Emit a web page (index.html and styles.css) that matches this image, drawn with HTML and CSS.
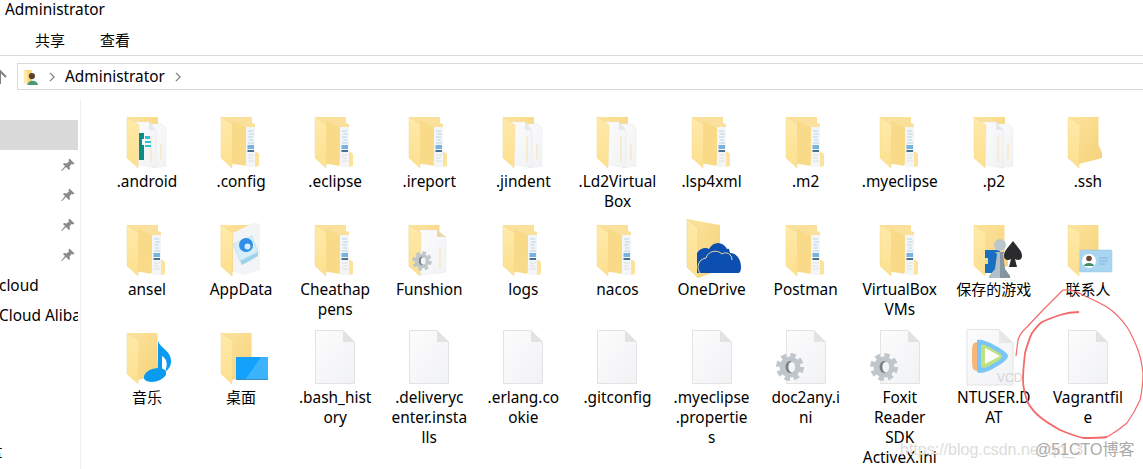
FILE: index.html
```html
<!DOCTYPE html>
<html lang="zh-CN">
<head>
    <meta charset="UTF-8">
    <title>Administrator</title>
    <link rel="stylesheet" href="styles.css">
</head>
<body>
    <svg class="defs" width="0" height="0">
        <defs>
            <linearGradient id="flap" x1="0" y1="0" x2="0" y2="1">
                <stop offset="0" stop-color="#ffeaa9"/>
                <stop offset="1" stop-color="#fde08f"/>
            </linearGradient>
            <linearGradient id="back" x1="0" y1="0" x2="1" y2="1">
                <stop offset="0" stop-color="#fde39d"/>
                <stop offset="1" stop-color="#f5d279"/>
            </linearGradient>
            <linearGradient id="sheet" x1="0" y1="0" x2="1" y2="1">
                <stop offset="0" stop-color="#fcfcfd"/>
                <stop offset="1" stop-color="#f1f2f4"/>
            </linearGradient>

            <!-- folders -->
            <path id="flap-1" d="M12 5 L24 13 L23 56 L12 46 Z" fill="url(#flap)" stroke="#f0d48a" stroke-width=".4"/>
            <g id="f-plain">
                <path d="M12 5 H42.5 V33 L46 41 V46 L23 52 Z" fill="url(#back)"/>
                <use href="#flap-1"/>
            </g>
            <g id="f-docs">
                <path d="M12 5 H43 V11 L46 12 V39 L50 42 V54 L23 52 Z" fill="#fae09a"/>
                <use href="#flap-1"/>
                <path d="M23 9 L38 16 L36 54 L23 51 Z" fill="#f8da88"/>
                <rect x="37" y="15" width="9" height="40" fill="#f3f5f6"/>
                <g stroke="#b5d3ea" stroke-width="1">
                    <path d="M39 19 H44 M40 22 H45 M39 25 H44 M40 28 H44 M39 31 H45"/>
                    <path d="M38.500 34 H45 M38.500 36 H45" stroke="#79b2dc" stroke-width="2"/>
                    <path d="M38.500 39 H45" stroke="#45708f" stroke-width="2"/>
                    <path d="M39 43 H45 M39 46 H44 M39 49 H45" stroke="#dde0e3"/>
                </g>
                <path d="M46 40 L50 43 V54 L46 55 Z" fill="#fde29c"/>
            </g>
            <g id="f-sheets">
                <path d="M12 5 H43 V40 L23 52 Z" fill="url(#back)"/>
                <path d="M30 12 H47 L51 16 V54 L38 56 Z" fill="url(#sheet)" stroke="#e8e9ea" stroke-width=".5"/>
                <path d="M19 10 H34 L41 18 V56 L20 52 Z" fill="url(#sheet)" stroke="#e4e5e6" stroke-width=".5"/>
                <path d="M34 10 V18 H41" fill="#e6e7e9"/>
                <path d="M36 24 V50" stroke="#f7e3a6" stroke-width="1"/>
                <path d="M46 32 V48" stroke="#f7e3a6" stroke-width="1"/>
                <use href="#flap-1"/>
            </g>
            <g id="f-android">
                <use href="#f-sheets"/>
                <path d="M24 21 H29 V27 H27 V33 H29 V48 H24 Z" fill="#0c8d83"/>
                <path d="M30 24 H35 V27 H30 Z M30 29 H36 V31 H30 Z M30 33 H36 V35 H30 Z" fill="#2cc4d2"/>
            </g>
            <g id="f-funshion">
                <use href="#f-plain"/>
                <path d="M23 10 H40 L49 17 V52 L23 55 Z" fill="url(#sheet)" stroke="#e4e5e6" stroke-width=".5"/>
                <path d="M40 10 V17 H49" fill="#ead9a8"/>
                <path d="M43 28 V48" stroke="#f7e3a6" stroke-width="1"/>
                <use href="#flap-1"/>
                <use href="#gear-small"/>
            </g>
            <g id="f-appdata">
                <use href="#f-plain"/>
                <path d="M24 13 L46 2 L51 5 V50 L34 55 L24 51 Z" fill="#f3f4f6"/>
                <path d="M24 24 L43 16 L49 32 L31 41 Z" fill="#d6eef9" stroke="#a7d6ee" stroke-width=".5"/>
                <path d="M31 41 L49 32 L49 36 L33 45 Z" fill="#9fd3ec"/>
                <circle cx="37" cy="25" r="7" fill="#2f8fe6"/>
                <circle cx="38.500" cy="26.500" r="3" fill="#d8ecfb"/>
                <use href="#flap-1"/>
            </g>
            <g id="f-music">
                <use href="#f-plain"/>
                <ellipse cx="40" cy="47" rx="11.500" ry="6.500" fill="#0a9af0" transform="rotate(-15 40 47)"/>
                <path d="M43 12 C44 20 56 22 56 33 C56 38 54 41 50 44 C53 36 52 31 47 28 V45 H43 Z" fill="#0a9af0"/>
            </g>
            <g id="f-desktop">
                <use href="#f-plain"/>
                <rect x="27" y="29" width="32" height="23" fill="#13a1fb"/>
                <path d="M36 52 L52 29 H59 V52 Z" fill="#3cb3fd"/>
                <rect x="27" y="51" width="32" height="1" fill="#3d8dc4"/>
            </g>
            <g id="f-onedrive">
                <path d="M7 -1 L40 5 V50 L18 58 Z" fill="url(#back)"/>
                <path d="M7 -1 L18 8 V58 L7 47 Z" fill="url(#flap)" stroke="#e5cd85" stroke-width=".5"/>
                <path d="M17 53 V33 C20 28 26 27 29 29 C33 21 43 21 47 29 C50 28 49 30 50 33 C57 33 61 40 61 47 C61 51 60 53 58 53 Z" fill="#0d4fb0"/>
                <path d="M20 53 C16 48 18 39 26 38 C28 31 37 29 42 34 C46 31 52 34 52 40" fill="none" stroke="#e9dca8" stroke-width="1"/>
            </g>
            <g id="f-games">
                <use href="#f-plain"/>
                <path d="M23 30 H38 V53 H23 V44 H26 V38 H23 Z" fill="#1a6fc0"/>
                <path d="M51 21 C47 27 42 30 42 36 C42 40 46 41 49 39 L47 47 H55 L53 39 C56 41 60 40 60 36 C60 30 55 27 51 21 Z" fill="#2b2b2d"/>
                <circle cx="38" cy="25" r="6" fill="#bcc7cd"/>
                <path d="M33 32 H43 L41 34 L43 49 L48 56 V58 H27 V56 L33 49 L35 34 Z" fill="#b3bfc6"/>
                <path d="M38 32 H43 L41 34 L43 49 L48 56 V58 H38 Z" fill="#8696a0"/>
            </g>
            <g id="f-contacts">
                <use href="#f-plain"/>
                <rect x="24" y="30" width="32" height="22" rx="1" fill="#a9d5f0" stroke="#92c4e2" stroke-width=".5"/>
                <circle cx="33" cy="41" r="7" fill="#fff"/>
                <circle cx="33" cy="38.500" r="2.800" fill="#6b4a35"/>
                <path d="M28 46 C28 42 38 42 38 46 Z" fill="#3e8f62"/>
                <path d="M43 38 H52 M43 41 H52 M43 44 H49" stroke="#7fb4d6" stroke-width="1"/>
            </g>

            <!-- files -->
            <path id="file" d="M12.500 2.500 H40 L51.500 14 V55.500 H12.500 Z" fill="url(#sheet)" stroke="#e3e3e3"/>
            <g id="f-file">
                <use href="#file"/>
                <path d="M40 2.500 V14 H51.500 Z" fill="#e2e2e2"/>
            </g>
            <g id="gear">
                <circle cx="0" cy="0" r="10.500" fill="#c0c7cc"/>
                <circle cx="0" cy="0" r="11.500" fill="none" stroke="#c0c7cc" stroke-width="5" stroke-dasharray="5.200 3.830"/>
                <ellipse cx="0" cy="0" rx="4.500" ry="6" fill="#7b8186"/>
                <ellipse cx="1.800" cy="0" rx="3.400" ry="5.200" fill="#f4f5f6"/>
            </g>
            <g id="gear-small" transform="translate(25 41) scale(.7)">
                <use href="#gear"/>
            </g>
            <g id="f-config">
                <use href="#f-file"/>
                <g transform="translate(16 39)"><use href="#gear"/></g>
            </g>
            <g id="f-video">
                <path d="M5 1.500 H37 L51 15 V57 H5 Z" fill="url(#sheet)" stroke="#e3e3e3"/>
                <path d="M37 1.500 V15 H51 Z" fill="#e8e8e8"/>
                <path d="M16 14 C10 14 10 17 10 28 C10 40 10 43 16 43 Z" fill="#f9b678"/>
                <path d="M15 12 C18 11 24 12 34 18 C43 23 46 26 46 28 C46 30 43 34 34 39 C24 45 18 46 15 44 Z" fill="#7cc6f7"/>
                <path d="M19 17 C21 16 26 18 32 22 C38 25 40 27 40 28 C40 30 38 32 32 35 C26 39 21 41 19 39 Z" fill="#bde381"/>
                <path d="M23 20 L38 28 L23 36 Z" fill="#fff"/>
                <text x="35" y="54" class="vcd">VCD</text>
            </g>
        </defs>
    </svg>

    <div class="title">Administrator</div>

    <div class="ribbon">
        <span class="tab">共享</span>
        <span class="tab">查看</span>
    </div>

    <div class="address-row">
        <svg class="up" viewBox="0 0 8 14"><path d="M0 1 V14 M-6 7 L0 1 L6 7" fill="none" stroke="#808080" stroke-width="2"/></svg>
        <div class="address">
            <svg class="user-icon" viewBox="0 0 18 20">
                <path d="M1 2 H10 V17 L5 18 L1 16 Z" fill="#f9d977"/>
                <path d="M1 2 L5 4 V19 L1 16 Z" fill="#fdeab0"/>
                <circle cx="10" cy="9" r="3.500" fill="#5a4030"/>
                <path d="M5 19 C5 13 16 12 17 19 Z" fill="#4b9b74"/>
            </svg>
            <svg class="chev" viewBox="0 0 7 12"><path d="M1 1 L6 6 L1 11" fill="none" stroke="#808080" stroke-width="1.500"/></svg>
            <span class="crumb">Administrator</span>
            <svg class="chev" viewBox="0 0 7 12"><path d="M1 1 L6 6 L1 11" fill="none" stroke="#808080" stroke-width="1.500"/></svg>
        </div>
    </div>

    <div class="main">
        <div class="sidebar">
            <div class="side-row selected"></div>
            <div class="side-row"><svg class="pin"><use href="#pin"/></svg></div>
            <div class="side-row"><svg class="pin"><use href="#pin"/></svg></div>
            <div class="side-row"><svg class="pin"><use href="#pin"/></svg></div>
            <div class="side-row"><svg class="pin"><use href="#pin"/></svg></div>
            <div class="side-row"><span class="side-text">cloud</span></div>
            <div class="side-row"><span class="side-text">Cloud Alibaba</span></div>
            <div class="side-row drive"><span class="side-edge">盘</span></div>
            <svg class="defs" width="0" height="0"><defs>
                <path id="pin" d="M8.500 .5 L13.500 5.500 L12 6.500 L10.500 6 L8.500 8.500 L9 11 L8 12 L5 9 L1 13 L0 13 L4 8 L2 6 L3 5 L5.500 5.500 L8 3.500 L7.500 2 Z" fill="#8a8a8a"/>
            </defs></svg>
        </div>

        <div class="grid">
            <div class="item"><svg class="icon" viewBox="0 0 64 59"><use href="#f-android"/></svg><div class="name">.android</div></div>
            <div class="item"><svg class="icon" viewBox="0 0 64 59"><use href="#f-docs"/></svg><div class="name">.config</div></div>
            <div class="item"><svg class="icon" viewBox="0 0 64 59"><use href="#f-docs"/></svg><div class="name">.eclipse</div></div>
            <div class="item"><svg class="icon" viewBox="0 0 64 59"><use href="#f-docs"/></svg><div class="name">.ireport</div></div>
            <div class="item"><svg class="icon" viewBox="0 0 64 59"><use href="#f-sheets"/></svg><div class="name">.jindent</div></div>
            <div class="item"><svg class="icon" viewBox="0 0 64 59"><use href="#f-sheets"/></svg><div class="name">.Ld2Virtual<br>Box</div></div>
            <div class="item"><svg class="icon" viewBox="0 0 64 59"><use href="#f-docs"/></svg><div class="name">.lsp4xml</div></div>
            <div class="item"><svg class="icon" viewBox="0 0 64 59"><use href="#f-docs"/></svg><div class="name">.m2</div></div>
            <div class="item"><svg class="icon" viewBox="0 0 64 59"><use href="#f-docs"/></svg><div class="name">.myeclipse</div></div>
            <div class="item"><svg class="icon" viewBox="0 0 64 59"><use href="#f-sheets"/></svg><div class="name">.p2</div></div>
            <div class="item"><svg class="icon" viewBox="0 0 64 59"><use href="#f-plain"/></svg><div class="name">.ssh</div></div>

            <div class="item"><svg class="icon" viewBox="0 0 64 59"><use href="#f-docs"/></svg><div class="name">ansel</div></div>
            <div class="item"><svg class="icon" viewBox="0 0 64 59"><use href="#f-appdata"/></svg><div class="name">AppData</div></div>
            <div class="item"><svg class="icon" viewBox="0 0 64 59"><use href="#f-docs"/></svg><div class="name">Cheathap<br>pens</div></div>
            <div class="item"><svg class="icon" viewBox="0 0 64 59"><use href="#f-funshion"/></svg><div class="name">Funshion</div></div>
            <div class="item"><svg class="icon" viewBox="0 0 64 59"><use href="#f-docs"/></svg><div class="name">logs</div></div>
            <div class="item"><svg class="icon" viewBox="0 0 64 59"><use href="#f-docs"/></svg><div class="name">nacos</div></div>
            <div class="item"><svg class="icon" viewBox="0 0 64 59"><use href="#f-onedrive"/></svg><div class="name">OneDrive</div></div>
            <div class="item"><svg class="icon" viewBox="0 0 64 59"><use href="#f-docs"/></svg><div class="name">Postman</div></div>
            <div class="item"><svg class="icon" viewBox="0 0 64 59"><use href="#f-docs"/></svg><div class="name">VirtualBox<br>VMs</div></div>
            <div class="item"><svg class="icon" viewBox="0 0 64 59"><use href="#f-games"/></svg><div class="name cjk">保存的游戏</div></div>
            <div class="item"><svg class="icon" viewBox="0 0 64 59"><use href="#f-contacts"/></svg><div class="name cjk">联系人</div></div>

            <div class="item"><svg class="icon" viewBox="0 0 64 59"><use href="#f-music"/></svg><div class="name cjk">音乐</div></div>
            <div class="item"><svg class="icon" viewBox="0 0 64 59"><use href="#f-desktop"/></svg><div class="name cjk">桌面</div></div>
            <div class="item"><svg class="icon" viewBox="0 0 64 59"><use href="#f-file"/></svg><div class="name">.bash_hist<br>ory</div></div>
            <div class="item"><svg class="icon" viewBox="0 0 64 59"><use href="#f-file"/></svg><div class="name">.deliveryc<br>enter.insta<br>lls</div></div>
            <div class="item"><svg class="icon" viewBox="0 0 64 59"><use href="#f-file"/></svg><div class="name">.erlang.co<br>okie</div></div>
            <div class="item"><svg class="icon" viewBox="0 0 64 59"><use href="#f-file"/></svg><div class="name">.gitconfig</div></div>
            <div class="item"><svg class="icon" viewBox="0 0 64 59"><use href="#f-file"/></svg><div class="name">.myeclipse<br>.propertie<br>s</div></div>
            <div class="item"><svg class="icon" viewBox="0 0 64 59"><use href="#f-config"/></svg><div class="name">doc2any.i<br>ni</div></div>
            <div class="item"><svg class="icon" viewBox="0 0 64 59"><use href="#f-config"/></svg><div class="name">Foxit<br>Reader<br>SDK<br>ActiveX.ini</div></div>
            <div class="item"><svg class="icon" viewBox="0 0 64 59"><use href="#f-video"/></svg><div class="name">NTUSER.D<br>AT</div></div>
            <div class="item"><svg class="icon" viewBox="0 0 64 59"><use href="#f-file"/></svg><div class="name">Vagrantfil<br>e</div></div>
        </div>
    </div>

    <!-- hand drawn circle on top of the screenshot -->
    <svg class="scribble" viewBox="0 0 1143 469">
        <path class="thin" d="M1016 356 L1018 340 C1020 333 1024 330 1027 327 L1043 310 L1063 290 C1070 289 1076 291 1083 295 C1092 299 1100 303 1107 307 C1116 313 1122 320 1127 327 C1132 335 1135 342 1138 350 C1141 358 1142 365 1143 373 C1143 383 1142 392 1140 400 C1136 409 1132 416 1127 423 C1120 429 1114 433 1107 437"/>
        <path class="thick" d="M1107 437 C1099 438 1091 438 1083 438 C1075 436 1067 433 1060 430 C1053 426 1046 422 1040 417 C1035 413 1031 408 1028 403 C1025 395 1023 388 1023 380 C1023 371 1024 362 1025 353 C1027 346 1029 339 1032 333 C1035 329 1038 325 1042 322 C1048 319 1054 317 1060 315 C1066 313 1072 312 1079 312"/>
    </svg>
    <div class="mark-csdn">https://blog.csdn.net/qq_3</div>
    <div class="mark-cto">@51CTO博客</div>
</body>
</html>
```

FILE: styles.css
```css
html, body {
    margin: 0;
    padding: 0;
    height: 469px;
    overflow: hidden;
}
body {
    position: relative;
    background: #fff;
    color: #000;
    font-family: "Noto Sans", "Noto Sans CJK SC", sans-serif;
    font-size: 15.4px;
}
.defs {
    position: absolute;
}
.title {
    height: 19px;
    line-height: 20px;
    padding-left: 5px;
}
.ribbon {
    display: flex;
    gap: 35px;
    height: 36px;
    padding-left: 35px;
    align-items: center;
    border-bottom: 1px solid #d9d9d9;
    font-family: "Noto Sans CJK SC", sans-serif;
    font-size: 15px;
}
.tab {
    position: relative;
    top: 2px;
    width: 30px;
}
.address-row {
    display: flex;
    align-items: center;
    height: 27px;
    margin-top: 7px;
}
.up {
    width: 8px;
    height: 14px;
    overflow: visible;
    flex: none;
}
.address {
    display: flex;
    align-items: center;
    flex: 1;
    height: 27px;
    box-sizing: border-box;
    margin-left: 9px;
    margin-right: -4px;
    padding-left: 5px;
    border: 1px solid #d9d9d9;
}
.user-icon {
    width: 16px;
    height: 18px;
    flex: none;
}
.chev {
    width: 6px;
    height: 10px;
    flex: none;
    margin-left: 10px;
}
.crumb {
    margin-left: 10px;
    line-height: 25px;
    height: 25px;
}
.main {
    display: flex;
    margin-top: 10px;
}
.sidebar {
    width: 80px;
    height: 369px;
    border-right: 1px solid #eeeeee;
    padding-top: 20px;
    overflow: hidden;
}
.side-row {
    display: flex;
    align-items: center;
    justify-content: flex-end;
    height: 30px;
    width: 78px;
    overflow: hidden;
    white-space: nowrap;
}
.side-row.selected {
    background: #d9d9d9;
}
.side-row.drive {
    margin-top: 105px;
}
.side-text {
    flex: none;
    width: 79px;
    margin-left: -1px;
}
.side-edge {
    flex: none;
    margin-left: -13px;
    margin-right: auto;
}
.pin {
    width: 14px;
    height: 14px;
    margin-right: 3px;
}
.grid {
    display: grid;
    grid-template-columns: repeat(11, 94.1px);
    grid-auto-rows: 108px;
    padding-left: 19px;
    padding-top: 12px;
}
.item {
    width: 94px;
    display: flex;
    flex-direction: column;
    align-items: center;
}
.icon {
    width: 64px;
    height: 59px;
    flex: none;
    overflow: visible;
}
.name {
    width: 94px;
    padding-top: 1px;
    line-height: 20px;
    text-align: center;
    white-space: nowrap;
}
.name.cjk {
    padding-top: 0;
    font-size: 15px;
}
.vcd {
    font-family: "Liberation Sans", sans-serif;
    font-size: 12px;
    fill: #d4d4d4;
}
.scribble {
    position: absolute;
    left: 0;
    top: 0;
    width: 1143px;
    height: 469px;
    pointer-events: none;
}
.scribble path {
    fill: none;
    stroke: #f46a6a;
    stroke-linejoin: round;
}
.scribble .thin {
    stroke-width: 1.200;
}
.scribble .thick {
    stroke-width: 1.800;
}
.mark-csdn {
    position: absolute;
    left: 900px;
    top: 440px;
    font-family: "Liberation Sans", sans-serif;
    font-size: 16px;
    line-height: 20px;
    color: #dcdcdc;
}
.mark-cto {
    position: absolute;
    left: 1035px;
    top: 439px;
    font-family: "Liberation Sans", "Noto Sans CJK SC", sans-serif;
    font-size: 16px;
    line-height: 22px;
    color: #aaaaaa;
    text-shadow: 0 0 2px #fff;
}
```
